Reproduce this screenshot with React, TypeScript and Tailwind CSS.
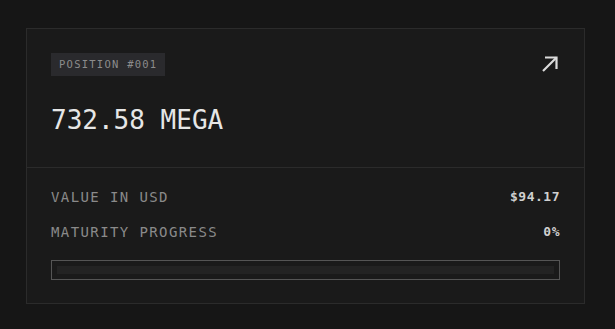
import React from "react";

export default function App() {
  return (
    <div
      className="w-[615px] h-[329px] bg-[#161616] pt-[28px] pl-[26px]"
      style={{ fontFamily: '"DejaVu Sans Mono", "Liberation Mono", monospace' }}
    >
      <div className="w-[559px] h-[276px] border border-[#2b2b2b] bg-[#1a1a1a] flex flex-col">
        <div className="flex justify-between pl-[24px] pr-[24px] pt-[24px] h-[138px]">
          <div className="flex flex-col">
            <div className="h-[23px] self-start px-[8px] bg-[#2a2a2d] flex items-center text-[10.5px] tracking-[1.25px] text-[#8c8c8c]">
              POSITION #001
            </div>
            <div className="mt-[28px] text-[26px] leading-[32px] text-[#e6e6e6] tracking-[0px]">
              732.58 MEGA
            </div>
          </div>
          <svg width="20" height="20" viewBox="0 0 20 20" className="mt-[1px] mr-[0px]">
            <path d="M3 17 L16.5 3.5" stroke="#dcdcdc" strokeWidth="2.2" fill="none" />
            <path d="M5 3.5 H16.5 V15" stroke="#dcdcdc" strokeWidth="2.2" fill="none" />
          </svg>
        </div>
        <div className="border-t border-[#2b2b2b] flex-1 px-[24px] pt-[19px] flex flex-col">
          <div className="flex justify-between items-center h-[20px]">
            <span className="text-[14px] tracking-[1.4px] text-[#8a8a8a]">VALUE IN USD</span>
            <span className="text-[13px] tracking-[0.5px] text-[#d0d0d0] font-bold">$94.17</span>
          </div>
          <div className="flex justify-between items-center h-[20px] mt-[15px]">
            <span className="text-[14px] tracking-[1.4px] text-[#8a8a8a]">MATURITY PROGRESS</span>
            <span className="text-[13px] tracking-[0.5px] text-[#d0d0d0] font-bold">0%</span>
          </div>
          <div className="mt-[18px] h-[20px] border border-[#555555] p-[5px]">
            <div className="h-[8px] bg-[#232323]" />
          </div>
        </div>
      </div>
    </div>
  );
}
